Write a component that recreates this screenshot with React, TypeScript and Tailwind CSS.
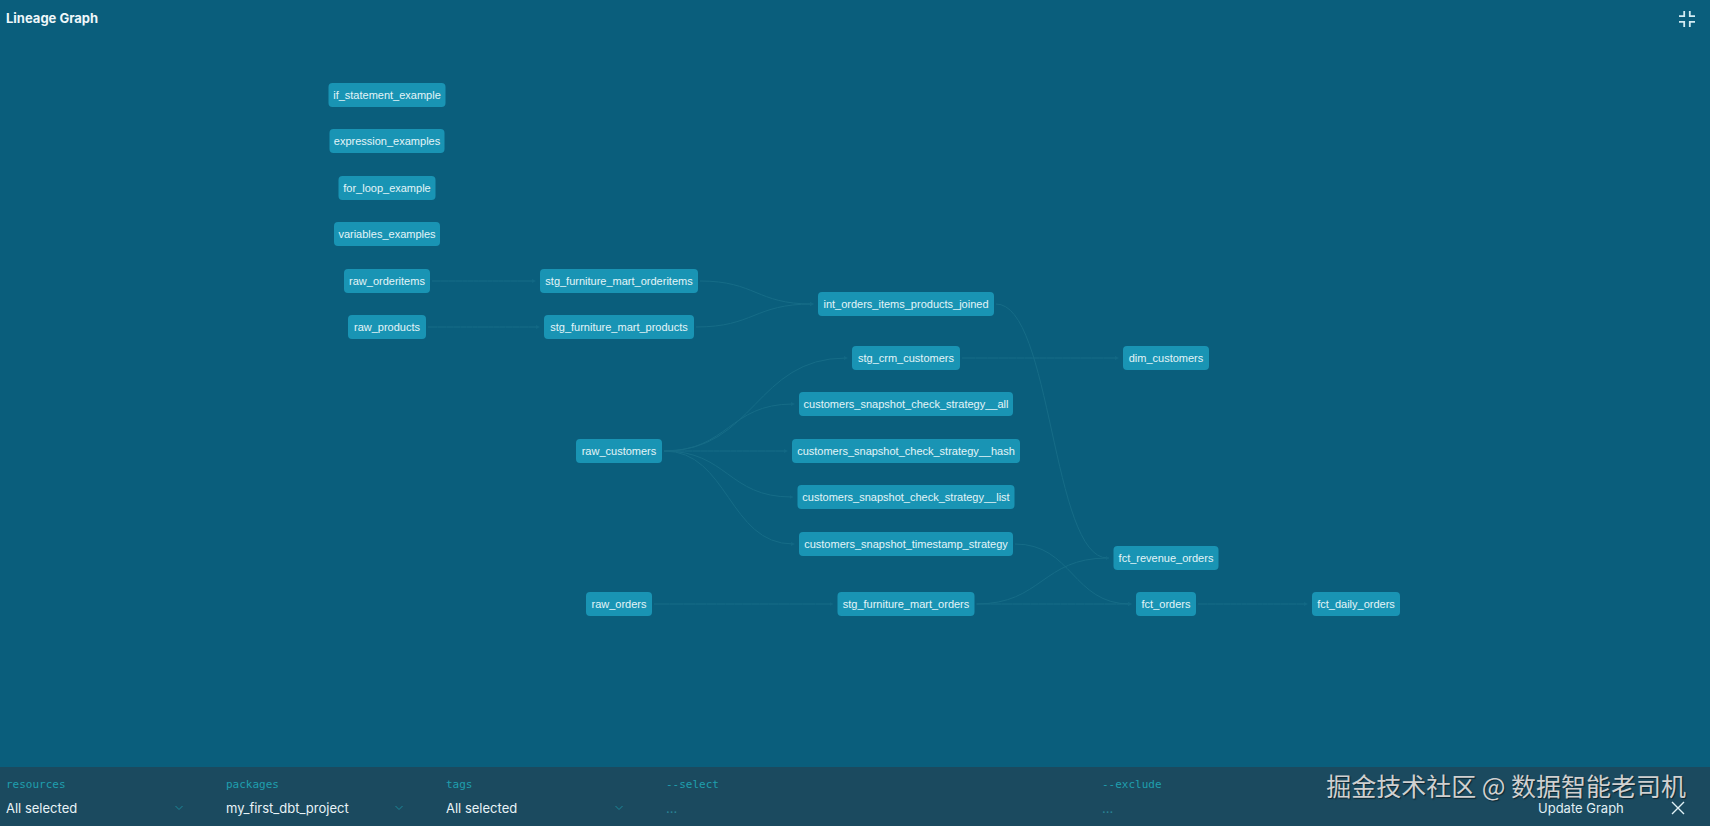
import { useState } from "react"

interface GraphNode {
  id: string
  x: number
  y: number
  w: number
}

// x / y are the centre of each node on the graph stage
const nodes: GraphNode[] = [
  { id: "if_statement_example", x: 78, y: 56, w: 117 },
  { id: "expression_examples", x: 78, y: 102, w: 115 },
  { id: "for_loop_example", x: 78, y: 149, w: 97 },
  { id: "variables_examples", x: 78, y: 195, w: 106 },
  { id: "raw_orderitems", x: 78, y: 242, w: 86 },
  { id: "raw_products", x: 78, y: 288, w: 78 },
  { id: "stg_furniture_mart_orderitems", x: 310, y: 242, w: 158 },
  { id: "stg_furniture_mart_products", x: 310, y: 288, w: 150 },
  { id: "raw_customers", x: 310, y: 412, w: 86 },
  { id: "raw_orders", x: 310, y: 565, w: 66 },
  { id: "int_orders_items_products_joined", x: 597, y: 265, w: 176 },
  { id: "stg_crm_customers", x: 597, y: 319, w: 108 },
  { id: "customers_snapshot_check_strategy__all", x: 597, y: 365, w: 214 },
  { id: "customers_snapshot_check_strategy__hash", x: 597, y: 412, w: 228 },
  { id: "customers_snapshot_check_strategy__list", x: 597, y: 458, w: 217 },
  { id: "customers_snapshot_timestamp_strategy", x: 597, y: 505, w: 214 },
  { id: "stg_furniture_mart_orders", x: 597, y: 565, w: 137 },
  { id: "dim_customers", x: 857, y: 319, w: 86 },
  { id: "fct_revenue_orders", x: 857, y: 519, w: 105 },
  { id: "fct_orders", x: 857, y: 565, w: 60 },
  { id: "fct_daily_orders", x: 1047, y: 565, w: 88 },
]

const edges: [string, string][] = [
  ["raw_orderitems", "stg_furniture_mart_orderitems"],
  ["raw_products", "stg_furniture_mart_products"],
  ["stg_furniture_mart_orderitems", "int_orders_items_products_joined"],
  ["stg_furniture_mart_products", "int_orders_items_products_joined"],
  ["raw_customers", "stg_crm_customers"],
  ["raw_customers", "customers_snapshot_check_strategy__all"],
  ["raw_customers", "customers_snapshot_check_strategy__hash"],
  ["raw_customers", "customers_snapshot_check_strategy__list"],
  ["raw_customers", "customers_snapshot_timestamp_strategy"],
  ["stg_crm_customers", "dim_customers"],
  ["int_orders_items_products_joined", "fct_revenue_orders"],
  ["customers_snapshot_timestamp_strategy", "fct_orders"],
  ["raw_orders", "stg_furniture_mart_orders"],
  ["stg_furniture_mart_orders", "fct_revenue_orders"],
  ["stg_furniture_mart_orders", "fct_orders"],
  ["fct_orders", "fct_daily_orders"],
]

const byId = new Map(nodes.map((n) => [n.id, n]))

function edgePath(from: string, to: string) {
  const a = byId.get(from)!
  const b = byId.get(to)!
  const x1 = a.x + a.w / 2 + 2
  const x2 = b.x - b.w / 2 - 6
  const mid = (x1 + x2) / 2
  return `M${x1} ${a.y} C${mid} ${a.y} ${mid} ${b.y} ${x2} ${b.y}`
}

function LineageGraph() {
  return (
    <div className="relative mx-auto h-[620px] w-[1092px] shrink-0">
      <svg className="absolute inset-0 h-full w-full" fill="none" stroke="#166c87" aria-hidden="true">
        <defs>
          <marker id="arrow" markerWidth="5" markerHeight="5" refX="2" refY="2" orient="auto">
            <path d="M0 0 L4 2 L0 4 Z" fill="#126884" stroke="none" />
          </marker>
        </defs>
        {edges.map(([from, to]) => (
          <path key={`${from}-${to}`} d={edgePath(from, to)} markerEnd="url(#arrow)" />
        ))}
      </svg>
      {nodes.map((n) => (
        <div
          key={n.id}
          className="absolute flex h-6 -translate-x-1/2 -translate-y-1/2 items-center justify-center rounded-sm bg-[#1994b4] pb-px font-['Liberation_Sans',Arial,sans-serif] text-[11px] leading-4 whitespace-nowrap text-[#e3f4f8]"
          style={{ left: n.x, top: n.y, width: n.w }}
        >
          {n.id}
        </div>
      ))}
    </div>
  )
}

function FilterSelect({ label, options }: { label: string; options: string[] }) {
  return (
    <div className="w-[220px] shrink-0 pr-10">
      <label htmlFor={label} className="block font-['DejaVu_Sans_Mono',monospace] text-[11px] leading-4 text-[#1f9fae]">
        {label}
      </label>
      <div className="relative mt-[7px]">
        <select
          id={label}
          className="block w-full appearance-none bg-transparent p-0 text-[13px] leading-4 text-[#e8f3f7] outline-none"
        >
          {options.map((o) => (
            <option key={o}>{o}</option>
          ))}
        </select>
        <svg
          className="pointer-events-none absolute top-1 right-[3px] h-2 w-2"
          viewBox="0 0 8 8"
          fill="none"
          stroke="#1c8798"
          aria-hidden="true"
        >
          <path d="M0.5 2 L4 5.5 L7.5 2" />
        </svg>
      </div>
    </div>
  )
}

function FilterInput({ label }: { label: string }) {
  const [value, setValue] = useState("")

  return (
    <div className="min-w-0 flex-1">
      <label htmlFor={label} className="block font-['DejaVu_Sans_Mono',monospace] text-[11px] leading-4 text-[#1f9fae]">
        {label}
      </label>
      <input
        id={label}
        type="text"
        value={value}
        onChange={(e) => setValue(e.target.value)}
        placeholder="..."
        className="mt-[7px] block w-full bg-transparent text-[13px] leading-4 text-[#e8f3f7] outline-none placeholder:text-[#2a8496]"
      />
    </div>
  )
}

export default function App() {
  return (
    <div className="flex min-h-screen flex-col bg-[#0a5e7c] font-['Inter',sans-serif]">
      <header className="flex items-start justify-between px-1.5 pt-[10px]">
        <h1 className="text-[13px] leading-4 font-bold text-[#eef7fa]">Lineage Graph</h1>
        <button type="button" aria-label="Exit full screen" className="mr-2">
          <svg className="h-[18px] w-[18px]" viewBox="0 0 18 18" fill="none" stroke="#d3ecf3" strokeWidth="1.8">
            <path d="M1 6.2 H6.2 V1 M11.8 1 V6.2 H17 M1 11.8 H6.2 V17 M17 11.8 H11.8 V17" />
          </svg>
        </button>
      </header>

      <main className="grow overflow-hidden pt-[11px]">
        <LineageGraph />
      </main>

      <footer className="relative flex bg-[#1b4a5f] px-1.5 pt-[10px] pb-[10px]">
        <FilterSelect label="resources" options={["All selected"]} />
        <FilterSelect label="packages" options={["my_first_dbt_project"]} />
        <FilterSelect label="tags" options={["All selected"]} />
        <FilterInput label="--select" />
        <FilterInput label="--exclude" />
        <div className="flex w-[166px] shrink-0 items-end justify-between pr-[18px]">
          <button type="button" className="text-[13px] leading-4 text-[#e0eff4]">
            Update Graph
          </button>
          <button type="button" aria-label="Close">
            <svg className="h-4 w-4" viewBox="0 0 16 16" fill="none" stroke="#e0f2f7" strokeWidth="1.4">
              <path d="M2 2 L14 14 M14 2 L2 14" />
            </svg>
          </button>
        </div>
        <p className="pointer-events-none absolute top-1.5 right-6 font-['Noto_Sans_CJK_SC',sans-serif] text-[25px] leading-6 whitespace-nowrap text-[#d0d0d0] [text-shadow:1px_1px_1px_#0d2530]">
          掘金技术社区 @ 数据智能老司机
        </p>
      </footer>
    </div>
  )
}
